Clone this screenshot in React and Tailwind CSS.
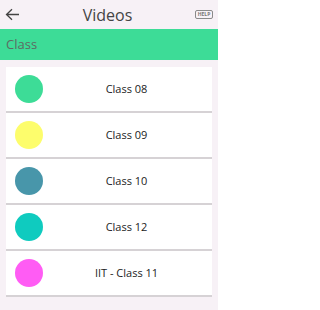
import React from 'react';

const classes = [
  { name: 'Class 08', color: 'bg-[#3ddc97]' },
  { name: 'Class 09', color: 'bg-[#fdfd6c]' },
  { name: 'Class 10', color: 'bg-[#4896aa]' },
  { name: 'Class 12', color: 'bg-[#0fcbbf]' },
  { name: 'IIT - Class 11', color: 'bg-[#ff5cf4]' },
];

const App = () => {
  return (
    <div className="w-[218px] h-[310px] overflow-hidden bg-[#f7f1f6] font-['Open_Sans',sans-serif]">
      {/* Header */}
      <div className="h-[29px] flex items-center justify-between px-[5px]">
        <svg width="15" height="13" viewBox="0 0 15 13" className="text-[#444]">
          <path d="M14 6.5H2M7 1.2L1.5 6.5L7 11.8" fill="none" stroke="currentColor" strokeWidth="1.3" />
        </svg>
        <span className="text-[16px] text-[#444] leading-none">Videos</span>
        <div className="w-[18px] h-[9px] border border-[#8a8a8a] rounded-[2px] flex items-center justify-center">
          <span className="text-[5px] font-bold text-[#777] leading-none">HELP</span>
        </div>
      </div>

      {/* Section bar */}
      <div className="h-[31px] bg-[#3ddc97] flex items-center px-[6px]">
        <span className="text-[13px] text-[#5d6b63]">Class</span>
      </div>

      {/* List */}
      <div className="mt-[7px] mx-[6px] flex flex-col">
        {classes.map((c) => (
          <div key={c.name} className="h-[46px] bg-white border-b-2 border-[#d6d2d5] flex items-center pl-[9px]">
            <div className={`w-[28px] h-[28px] rounded-full flex-none ${c.color}`} />
            <span className="flex-1 text-center text-[11px] text-[#222] pr-[2px]">{c.name}</span>
          </div>
        ))}
      </div>
    </div>
  );
};

export default App;
